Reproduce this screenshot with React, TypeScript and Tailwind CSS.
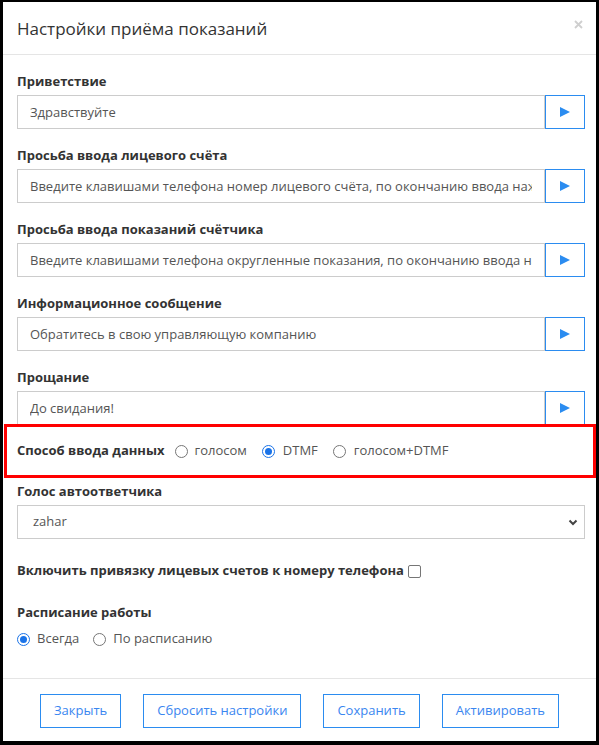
import React from "react";

const fields: { label: string; value: string }[] = [
  { label: "Приветствие", value: "Здравствуйте" },
  {
    label: "Просьба ввода лицевого счёта",
    value:
      "Введите клавишами телефона номер лицевого счёта, по окончанию ввода нажмите решётку",
  },
  {
    label: "Просьба ввода показаний счётчика",
    value:
      "Введите клавишами телефона округленные показания, по окончанию ввода нажмите решётку",
  },
  { label: "Информационное сообщение", value: "Обратитесь в свою управляющую компанию" },
  { label: "Прощание", value: "До свидания!" },
];

function Play() {
  return (
    <svg width="10" height="10" viewBox="0 0 10 10">
      <polygon points="0,0 10,5 0,10" fill="#2b8cf0" />
    </svg>
  );
}

function Radio({ checked }: { checked?: boolean }) {
  return checked ? (
    <span className="w-[13px] h-[13px] rounded-full border-[1.5px] border-[#1a73e8] flex items-center justify-center shrink-0 bg-white">
      <span className="w-[7px] h-[7px] rounded-full bg-[#1a73e8]" />
    </span>
  ) : (
    <span className="w-[13px] h-[13px] rounded-full border border-[#767676] shrink-0 bg-white" />
  );
}

export default function App() {
  return (
    <div className="w-[599px] h-[745px] bg-black pt-[2px] pl-[3px] pr-[3px] pb-[4px] font-['Open_Sans',sans-serif]">
      <div className="bg-white h-full flex flex-col">
        {/* Header */}
        <div className="h-[52px] flex items-center justify-between pl-[14px] pr-[13px] border-b border-[#e5e5e5] box-content">
          <div className="text-[17px] text-[#333] leading-none">Настройки приёма показаний</div>
          <svg width="9" height="9" viewBox="0 0 9 9" className="-mt-[8px]">
            <path d="M1 1L8 8M8 1L1 8" stroke="#cfcfcf" strokeWidth="1.8" />
          </svg>
        </div>

        {/* Body */}
        <div className="flex-1 flex flex-col pl-[14px] pr-[11px] pt-[16px]">
          {fields.map((f, i) => (
            <div key={i} className={i > 0 ? "mt-[16px]" : ""}>
              <div className="h-[20px] leading-[20px] text-[13px] font-bold text-[#333]">{f.label}</div>
              <div className="mt-[4px] flex h-[34px]">
                <input
                  readOnly
                  value={f.value}
                  className="flex-1 min-w-0 h-[34px] border border-[#ccc] pl-[12px] pr-[12px] text-[13px] text-[#555] outline-none bg-white"
                />
                <div className="w-[40px] h-[34px] border border-[#2b8cf0] flex items-center justify-center">
                  <Play />
                </div>
              </div>
            </div>
          ))}

          {/* Red highlighted row */}
          <div className="-mt-[1px] -ml-[13px] -mr-[11px] h-[54px] border-[3px] border-[#ff0000] pl-[10px] flex items-center text-[13px]">
            <span className="font-bold text-[#333]">Способ ввода данных</span>
            <span className="ml-[10px] flex items-center gap-[7px]">
              <Radio />
              <span className="text-[#555]">голосом</span>
            </span>
            <span className="ml-[15px] flex items-center gap-[8px]">
              <Radio checked />
              <span className="text-[#555]">DTMF</span>
            </span>
            <span className="ml-[15px] flex items-center gap-[8px]">
              <Radio />
              <span className="text-[#555]">голосом+DTMF</span>
            </span>
          </div>

          <div className="mt-[3px] h-[20px] leading-[20px] text-[13px] font-bold text-[#333]">Голос автоответчика</div>
          <div className="mt-[4px] h-[34px] border border-[#ccc] flex items-center justify-between pl-[15px] pr-[6px] text-[13px] text-[#555]">
            <span>zahar</span>
            <svg width="10" height="7" viewBox="0 0 10 7">
              <path d="M1.5 1.5L5 5L8.5 1.5" stroke="#444" strokeWidth="2" fill="none" />
            </svg>
          </div>

          <div className="mt-[22px] h-[20px] flex items-center text-[13px] font-bold text-[#333]">
            <span>Включить привязку лицевых счетов к номеру телефона</span>
            <span className="ml-[4px] w-[13px] h-[13px] rounded-[2px] border border-[#767676] bg-white" />
          </div>

          <div className="mt-[21px] h-[20px] leading-[20px] text-[13px] font-bold text-[#333]">Расписание работы</div>
          <div className="mt-[7px] h-[20px] flex items-center text-[13px] text-[#555]">
            <span className="flex items-center gap-[7px]">
              <Radio checked />
              <span>Всегда</span>
            </span>
            <span className="ml-[14px] flex items-center gap-[7px]">
              <Radio />
              <span>По расписанию</span>
            </span>
          </div>
        </div>

        {/* Footer */}
        <div className="border-t border-[#e5e5e5] pt-[15px] pb-[13px] flex justify-center gap-[22px] text-[13px] text-[#3a86f0]">
          <button className="h-[34px] px-[13px] border border-[#2b8cf0] bg-white">Закрыть</button>
          <button className="h-[34px] px-[13px] border border-[#2b8cf0] bg-white">Сбросить настройки</button>
          <button className="h-[34px] px-[13px] border border-[#2b8cf0] bg-white">Сохранить</button>
          <button className="h-[34px] px-[13px] border border-[#2b8cf0] bg-white">Активировать</button>
        </div>
      </div>
    </div>
  );
}
